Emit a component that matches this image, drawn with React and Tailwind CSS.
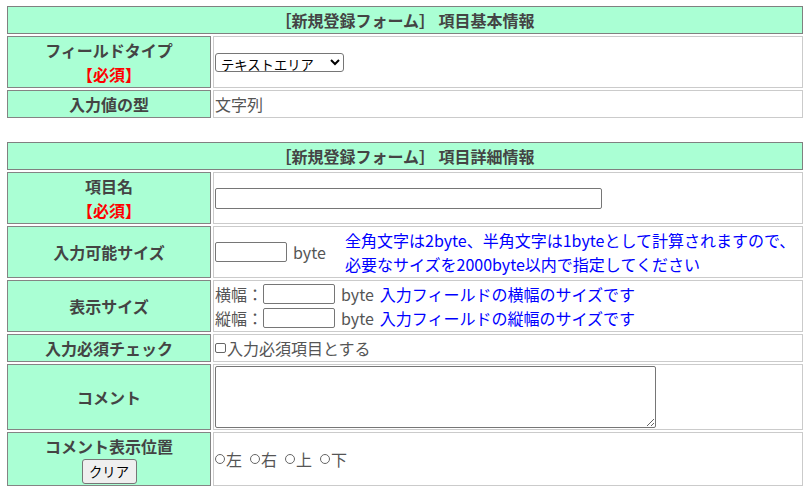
const labelCls =
  "bg-[#aaffd4] border border-[#848484] flex flex-col items-center justify-center py-[1px] font-bold text-[#444]";
const valueCls =
  "bg-white border border-[#cbcbcb] flex items-center px-[1px] py-[1px] text-[#555]";
const inputCls =
  "bg-white border border-[#767676] rounded-[2px] h-[20px] outline-none";

const Required = () => <span className="text-[#ff0000]">【必須】</span>;

const Header = ({ children }) => (
  <div className="col-span-2 h-[28px] bg-[#aaffd4] border border-[#808080] flex items-center justify-center font-bold text-[#444]">
    {children}
  </div>
);

export default function App() {
  return (
    <div className="min-h-screen bg-white font-['Noto_Sans_CJK_JP','Noto_Sans',sans-serif] text-[16px] leading-[24px] pt-[6px] pl-[7px]">
      {/* 項目基本情報 */}
      <div className="grid grid-cols-[204px_590px] gap-[2px] w-[796px]">
        <Header>［新規登録フォーム］ 項目基本情報</Header>

        <div className={labelCls}>
          <span>フィールドタイプ</span>
          <Required />
        </div>
        <div className={valueCls}>
          <select
            defaultValue="textarea"
            className="h-[19px] w-[129px] bg-white border border-[#767676] rounded-[3px] text-[13.33px] leading-[17px] text-black pl-[1px]"
          >
            <option value="text">テキスト</option>
            <option value="textarea">テキストエリア</option>
            <option value="select">セレクト</option>
          </select>
        </div>

        <div className={labelCls}>入力値の型</div>
        <div className={valueCls}>文字列</div>
      </div>

      {/* 項目詳細情報 */}
      <div className="grid grid-cols-[204px_590px] gap-[2px] w-[796px] mt-[24px]">
        <Header>［新規登録フォーム］ 項目詳細情報</Header>

        <div className={labelCls}>
          <span>項目名</span>
          <Required />
        </div>
        <div className={valueCls}>
          <input type="text" className={`${inputCls} w-[387px] h-[21px]`} />
        </div>

        <div className={labelCls}>入力可能サイズ</div>
        <div className={valueCls}>
          <input type="text" className={`${inputCls} w-[72px]`} />
          <span className="w-[58px] pl-[6px]">byte</span>
          <div className="text-[#0000ff]">
            全角文字は2byte、半角文字は1byteとして計算されますので、
            <br />
            必要なサイズを2000byte以内で指定してください
          </div>
        </div>

        <div className={labelCls}>表示サイズ</div>
        <div className={`${valueCls} flex-col !items-start`}>
          <div className="h-[24px] flex items-center">
            <span>横幅：</span>
            <input type="text" className={`${inputCls} w-[72px]`} />
            <span className="pl-[6px]">byte</span>
            <span className="pl-[6px] text-[#0000ff]">入力フィールドの横幅のサイズです</span>
          </div>
          <div className="h-[24px] flex items-center">
            <span>縦幅：</span>
            <input type="text" className={`${inputCls} w-[72px]`} />
            <span className="pl-[6px]">byte</span>
            <span className="pl-[6px] text-[#0000ff]">入力フィールドの縦幅のサイズです</span>
          </div>
        </div>

        <div className={labelCls}>入力必須チェック</div>
        <div className={valueCls}>
          <label className="flex items-center">
            <input
              type="checkbox"
              className="appearance-none w-[11px] h-[10px] border border-[#666] rounded-[2px] bg-white mr-[1px]"
            />
            入力必須項目とする
          </label>
        </div>

        <div className={labelCls}>コメント</div>
        <div className={valueCls}>
          <textarea className="w-[441px] h-[62px] bg-white border border-[#767676] rounded-[2px] outline-none" />
        </div>

        <div className={labelCls}>
          <span>コメント表示位置</span>
          <div className="h-[26px] flex items-center">
            <button
              type="button"
              className="h-[25px] w-[55px] bg-[#efefef] border border-[#767676] rounded-[3px] text-[13.33px] font-normal text-black"
            >
              クリア
            </button>
          </div>
        </div>
        <div className={valueCls}>
          <div className="flex items-center gap-[8px]">
            {["左", "右", "上", "下"].map((pos) => (
              <label key={pos} className="flex items-center">
                <input
                  type="radio"
                  name="position"
                  className="appearance-none w-[10px] h-[10px] rounded-full border border-[#666] bg-white mr-[1px]"
                />
                {pos}
              </label>
            ))}
          </div>
        </div>
      </div>
    </div>
  );
}
